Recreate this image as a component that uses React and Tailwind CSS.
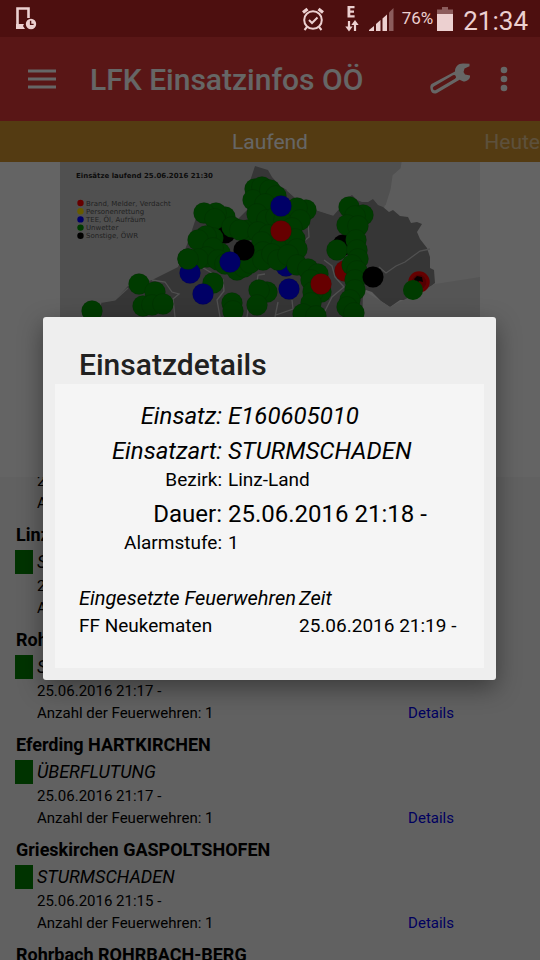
import React from "react";

const COLORS = {
  green: "#009400",
  blue: "#0000ff",
  red: "#ff0000",
  black: "#000000",
};

// Incident markers in drawing order: colour, x, y
const MARKERS = [
  ["black", 165, 71], ["black", 283, 83], ["blue", 226, 104], ["red", 285, 109],
  ["green", 165, 55], ["green", 156, 51], ["green", 144, 51], ["green", 155, 57],
  ["green", 153, 76], ["green", 146, 74], ["green", 138, 78], ["green", 160, 91],
  ["green", 153, 86], ["green", 147, 95], ["green", 128, 97], ["green", 138, 97],
  ["green", 158, 98], ["green", 165, 102], ["green", 177, 108], ["green", 184, 105],
  ["green", 190, 101], ["green", 172, 65], ["green", 188, 68], ["green", 180, 68],
  ["green", 195, 27], ["green", 202, 25], ["green", 193, 38], ["green", 210, 28],
  ["green", 216, 34], ["green", 205, 42], ["green", 197, 52], ["green", 207, 58],
  ["green", 216, 55], ["green", 224, 58], ["green", 198, 70], ["green", 209, 73],
  ["green", 202, 80], ["green", 203, 90], ["green", 221, 84], ["green", 203, 98],
  ["green", 212, 92], ["green", 246, 48], ["green", 237, 46], ["green", 240, 58],
  ["green", 232, 66], ["green", 235, 77], ["green", 237, 87], ["green", 218, 98],
  ["green", 228, 93], ["green", 237, 103], ["green", 248, 107], ["green", 258, 112],
  ["green", 251, 118], ["green", 261, 130], ["green", 253, 130], ["green", 251, 141],
  ["green", 243, 152], ["green", 256, 154], ["green", 207, 130], ["green", 199, 128],
  ["green", 197, 143], ["green", 172, 141], ["green", 173, 149], ["green", 153, 121],
  ["green", 79, 122], ["green", 95, 130], ["green", 83, 144], ["green", 92, 143],
  ["green", 103, 142], ["green", 32, 149],
  ["green", 289, 45], ["green", 303, 53], ["green", 295, 54], ["green", 287, 63],
  ["green", 298, 64], ["green", 296, 78], ["green", 277, 88], ["green", 297, 88],
  ["green", 298, 97], ["green", 292, 103], ["green", 297, 109], ["green", 295, 118],
  ["green", 295, 128], ["green", 290, 138], ["green", 287, 145], ["green", 294, 151],
  ["black", 184, 88], ["blue", 130, 111], ["green", 128, 97], ["blue", 170, 100],
  ["blue", 143, 132], ["blue", 221, 44], ["blue", 229, 127], ["red", 221, 69],
  ["red", 261, 122], ["black", 313, 115],
];

const LEGEND = [
  ["#ff0000", "Brand, Melder, Verdacht"],
  ["#ffe000", "Personenrettung"],
  ["#0000ff", "TEE, Öl, Aufräum"],
  ["#009400", "Unwetter"],
  ["#000000", "Sonstige, ÖWR"],
];

const INCIDENTS = [
  { place: "Linz-Land", type: "STURMSCHADEN", date: "25.06.2016 21:18 -" },
  { place: "Linz-Land", type: "STURMSCHADEN", date: "25.06.2016 21:18 -" },
  { place: "Rohrbach", type: "STURMSCHADEN", date: "25.06.2016 21:17 -" },
  { place: "Eferding HARTKIRCHEN", type: "ÜBERFLUTUNG", date: "25.06.2016 21:17 -" },
  { place: "Grieskirchen GASPOLTSHOFEN", type: "STURMSCHADEN", date: "25.06.2016 21:15 -" },
  { place: "Rohrbach ROHRBACH-BERG", type: "STURMSCHADEN", date: "25.06.2016 21:15 -" },
];

const LARGE = "h-[35px] align-middle text-2xl leading-7";
const SMALL = "h-7 align-top text-[19px] leading-6";

const DETAILS = [
  { label: "Einsatz:", value: "E160605010", style: LARGE + " italic" },
  { label: "Einsatzart:", value: "STURMSCHADEN", style: LARGE + " italic" },
  { label: "Bezirk:", value: "Linz-Land", style: SMALL },
  { label: "Dauer:", value: "25.06.2016 21:18 -", style: LARGE },
  { label: "Alarmstufe:", value: "1", style: SMALL },
];

function StatusBar() {
  return (
    <div className="relative z-20 flex h-[37px] shrink-0 items-center bg-[#4d0f0f] pl-4 pr-3 text-[#ecd0d0]">
      <svg width="21" height="23" viewBox="0 0 21 23" fill="none">
        <path d="M1.5 21V1.5h11V11" stroke="currentColor" strokeWidth="2.6" />
        <path d="M0 17h8l-1 2 2 3H0z" fill="currentColor" />
        <circle cx="15" cy="17" r="5.2" fill="currentColor" />
        <path d="M14.6 13.8v3.6h3" stroke="#4d0f0f" strokeWidth="1.4" />
      </svg>
      <div className="flex flex-1 items-center justify-end">
        <svg width="24" height="24" viewBox="0 0 24 24" fill="none" stroke="currentColor" strokeWidth="2" className="mr-5">
          <circle cx="12" cy="13" r="8.8" />
          <path d="M8 13l3 3 5.5-5.5" />
          <path d="M2 5.5L6.5 2M22 5.5L17.500 2" strokeWidth="3.2" />
          <path d="M6 20l-2.500 3M18 20l2.500 3" />
        </svg>
        <svg width="14" height="27" viewBox="0 0 14 27" className="mr-2.5">
          <path d="M2.500 1h7v2.300H5.300v2.200h3.700v2.200H5.300v2.500h4.300v2.300H2.500z" fill="currentColor" />
          <path d="M4 16v7M10 26v-7" stroke="currentColor" strokeWidth="2.200" />
          <path d="M.3 21.500h7.400L4 26.500zM6.300 20h7.400L10 15z" fill="currentColor" />
        </svg>
        <svg width="25" height="24" viewBox="0 0 25 24" fill="currentColor" className="mr-2">
          <path d="M0 24v-1l5-4v5zM7 24v-7l4.500-4v11zM13.500 24V11.500L18 7.500V24z" />
          <path d="M20 24V5.500L24.500 1v23z" opacity=".4" />
        </svg>
        <span className="mr-1 text-[17px]">76%</span>
        <svg width="16" height="24" viewBox="0 0 16 24" fill="currentColor" className="mr-2.5">
          <path d="M5 0h6v2.500h5V7H0V2.500h5z" opacity=".4" />
          <path d="M0 7h16v17H0z" />
        </svg>
        <span className="pt-1 text-[26px] leading-none">21:34</span>
      </div>
    </div>
  );
}

function AppBar() {
  return (
    <header className="flex h-[84px] shrink-0 items-center bg-[#de3937] pl-7 pr-8 text-white">
      <button aria-label="Menü" className="mr-[34px]">
        <svg width="28" height="20" viewBox="0 0 28 20" stroke="currentColor" strokeWidth="3">
          <path d="M0 2h28M0 10h28M0 18h28" />
        </svg>
      </button>
      <h1 className="flex-1 whitespace-nowrap pt-0.5 text-3xl font-medium">LFK Einsatzinfos OÖ</h1>
      <button aria-label="Einstellungen" className="mr-7">
        <svg width="42" height="32" viewBox="0 0 42 32">
          <path
            d="M1.500 21L25 8.500C25 4 28 .5 33 .5L39.500 .7V3.200L34.500 5.500L33.500 9L35 11.500L40 12.500C40.500 16 37 18.500 33.500 18.500L29.500 16.700L7 30C4 31.500 1 30 .5 26C0 24 .3 22 1.500 21z"
            fill="currentColor"
          />
          <path d="M4.800 25.200L24 14" stroke="#de3937" strokeWidth="4" strokeLinecap="round" />
        </svg>
      </button>
      <button aria-label="Mehr">
        <svg width="8" height="26" viewBox="0 0 8 26" fill="currentColor">
          <circle cx="4" cy="4" r="3.300" />
          <circle cx="4" cy="13" r="3.300" />
          <circle cx="4" cy="22" r="3.300" />
        </svg>
      </button>
    </header>
  );
}

function TabStrip() {
  return (
    <nav className="grid h-[41px] shrink-0 grid-cols-[1fr_auto_1fr] items-center bg-[#d2932d] pt-0.5 text-[21px] text-white">
      <span />
      <button>Laufend</button>
      <button className="justify-self-end opacity-50">Heute</button>
    </nav>
  );
}

function IncidentMap() {
  return (
    <div className="flex h-[315px] shrink-0 justify-center bg-[#fafafa]">
      <svg width="420" height="315" viewBox="0 0 420 315">
        <rect width="420" height="315" fill="#e6e6e6" />
        <path d="M0 0H341L340 6L332 13L330 27L325 43L320 60L200 160H0z" fill="#c9c9c9" />
        <path
          d="M195 4L208 8L212 15L220 24L227 28L236 36L248 43L257 48L266 51L273 53L280 45L286 37L292 33L297 38L302 40L308 40L313 37L318 43L323 45L329 50L333 48L340 54L348 55L351 61L357 60L362 62L357 70L360 77L367 86L370 95V106L374 108L375 121L362 131L350 138L340 138L330 145L321 139L312 130L303 127L300 315H20L35 155L42 140L55 138L68 124L92 118L118 105L128 80L138 50L162 48L175 60L187 48L188 25z"
          fill="#878787"
        />
        <path
          d="M303 128V315H400L420 240V115L375 122L330 145z"
          fill="#d4d4d4"
        />
        <g fill="none" stroke="#c8c8c8" strokeWidth="1.3">
          <path d="M325 43L330 27L332 13L340 6L341 0" />
          <path d="M227 28L236 36L248 43L257 48L273 53L280 45M248 60L249 75L243 80" />
          <path d="M42 140L55 138L68 126M92 118L105 120L112 130L119 132L113 137L115 155M128 97L150 110L163 118L164 129L157 138L160 155" />
          <path d="M370 87L360 89L345 100L336 104L326 111L319 105M264 98L272 104L275 115L284 125L272 135L262 155" />
          <path d="M205 112L198 113L197 120M232 138L233 147L216 153M218 140L215 155M187 155L190 135" />
        </g>
        {MARKERS.map(([color, x, y], i) => (
          <circle key={i} cx={x} cy={y} r="10.500" fill={COLORS[color]} stroke="#000" strokeOpacity=".2" strokeWidth=".5" />
        ))}
        <circle cx="359" cy="120" r="9" fill="none" stroke="#ff0000" strokeWidth="3.500" />
        <circle cx="359" cy="120" r="7.500" fill="#d00000" />
        <path d="M354 117l3-3 5 1 1 5-4-1-2 3z" fill="#100" />
        <circle cx="353" cy="128" r="10" fill="#009400" />
        <text x="16" y="16" fontSize="7" fontWeight="bold" fill="#222" className="font-['DejaVu_Sans']">
          Einsätze laufend 25.06.2016 21:30
        </text>
        {LEGEND.map(([color, label], i) => (
          <g key={label}>
            <circle cx="20.500" cy={41 + i * 8.2} r="3.200" fill={color} />
            <text x="26" y={43.500 + i * 8.2} fontSize="7" fill="#555" className="font-['DejaVu_Sans']">
              {label}
            </text>
          </g>
        ))}
      </svg>
    </div>
  );
}

function Incident({ place, type, date }) {
  return (
    <li className="pb-[9px] pl-4 text-[15px] leading-[22px]">
      <h2 className="text-lg font-bold leading-6">{place}</h2>
      <div className="-ml-px flex h-7 items-center gap-1 pt-0.5">
        <span className="h-6 w-[18px] bg-[#008000]" />
        <span className="text-lg italic">{type}</span>
      </div>
      <p className="pl-[21px]">{date}</p>
      <div className="flex justify-between pl-[21px] pr-[86px]">
        <span>Anzahl der Feuerwehren: 1</span>
        <a href="#details" className="text-[#0000ee]">Details</a>
      </div>
    </li>
  );
}

function DetailsDialog() {
  return (
    <div className="absolute inset-0 z-10 flex items-center bg-black/60 pl-[43px] pr-11 pt-[37px]">
      <section
        role="dialog"
        aria-labelledby="dialog-title"
        className="w-full rounded-[3px] bg-[#eeeeee] px-3 pb-3 shadow-[0_8px_24px_rgba(0,0,0,0.4)]"
      >
        <h2 id="dialog-title" className="pb-px pl-6 pt-[30px] text-3xl font-medium leading-9 text-[#212121]">
          Einsatzdetails
        </h2>
        <div className="bg-[#f5f5f5] pb-7 pl-6 pr-4 pt-[14px]">
          <table className="w-full text-left">
            <tbody>
              {DETAILS.map((row) => (
                <tr key={row.label} className={row.style}>
                  <th scope="row" className="w-[149px] p-0 pr-1.5 text-right font-normal">{row.label}</th>
                  <td className="p-0">{row.value}</td>
                </tr>
              ))}
            </tbody>
          </table>
          <table className="mt-[25px] w-full whitespace-nowrap text-left text-[19px] leading-7">
            <thead>
              <tr className="text-xl italic leading-7">
                <th scope="col" className="w-[220px] p-0 font-normal">Eingesetzte Feuerwehren</th>
                <th scope="col" className="p-0 font-normal">Zeit</th>
              </tr>
            </thead>
            <tbody>
              <tr>
                <td className="p-0">FF Neukematen</td>
                <td className="p-0">25.06.2016 21:19 -</td>
              </tr>
            </tbody>
          </table>
        </div>
      </section>
    </div>
  );
}

export default function App() {
  return (
    <div className="relative flex h-screen flex-col overflow-hidden bg-[#f2f2f2] font-[Roboto,sans-serif] text-black">
      <StatusBar />
      <AppBar />
      <TabStrip />
      <IncidentMap />
      <main className="min-h-0 flex-1 overflow-hidden">
        <ul className="-mt-[59px]">
          {INCIDENTS.map((incident, i) => (
            <Incident key={i} {...incident} />
          ))}
        </ul>
      </main>
      <DetailsDialog />
    </div>
  );
}
